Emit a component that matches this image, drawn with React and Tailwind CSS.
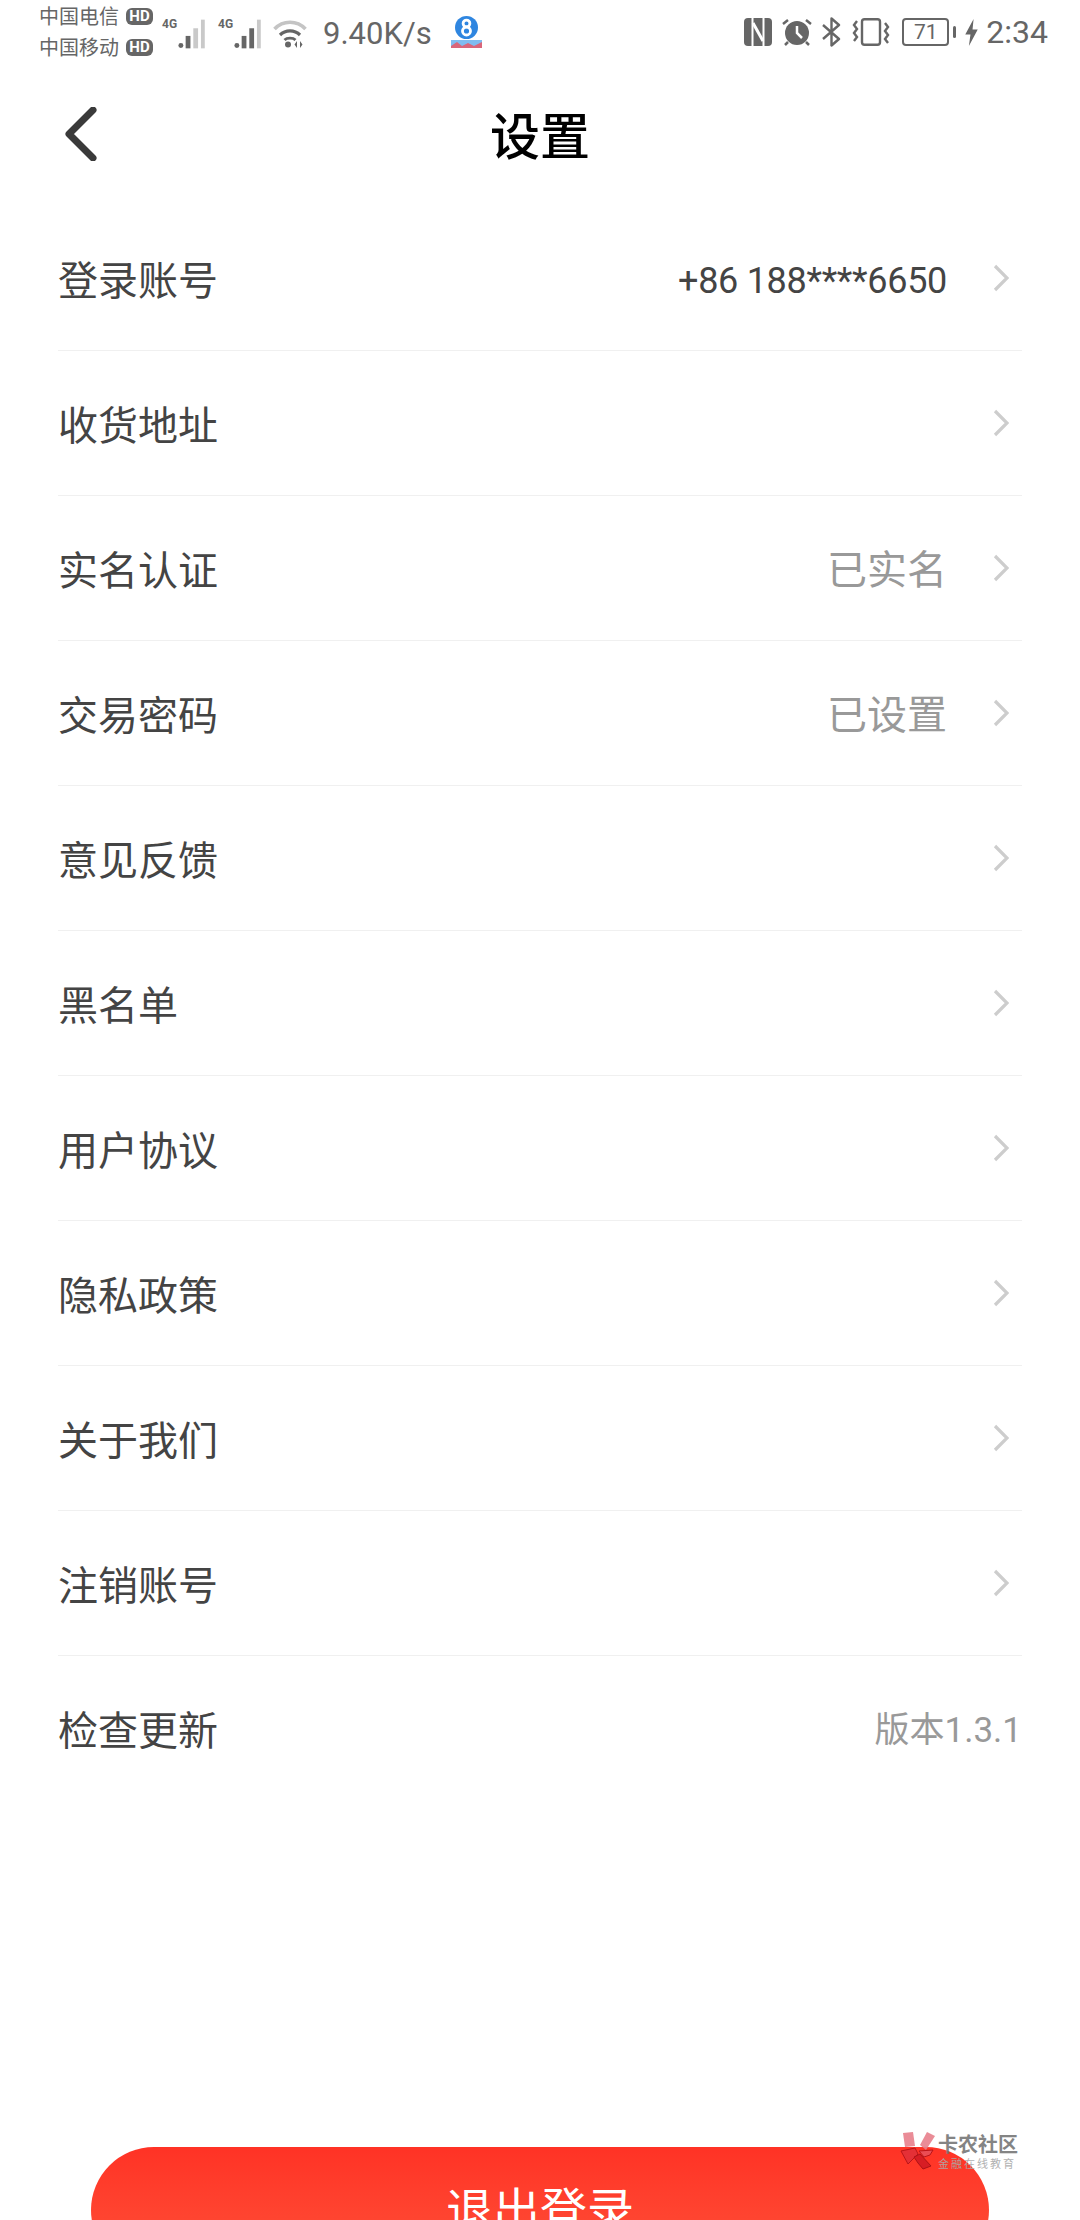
import React from 'react';

const rows = [
  { label: '登录账号', value: '+86 188****6650', dark: true },
  { label: '收货地址' },
  { label: '实名认证', value: '已实名' },
  { label: '交易密码', value: '已设置' },
  { label: '意见反馈' },
  { label: '黑名单' },
  { label: '用户协议' },
  { label: '隐私政策' },
  { label: '关于我们' },
  { label: '注销账号' },
];

const HdBadge = () => (
  <span className="flex h-[17px] w-[27px] items-center justify-center rounded-[6px] bg-[#666] text-[15px] leading-none font-bold text-white">
    HD
  </span>
);

const Signal = ({ level }) => (
  <div className="flex h-[34px] w-[44px] items-start">
    <span className="w-[17px] text-[12px] leading-[14px] font-bold text-[#666]">4G</span>
    <svg width="29" height="32" viewBox="0 0 29 32" className="mt-[1px]">
      <circle cx="3" cy="28" r="2.600" fill="#666" />
      <rect x="8" y="18" width="5" height="13" fill="#666" />
      <rect x="16" y="10" width="5" height="21" fill={level > 2 ? '#666' : '#c9c9c9'} />
      <rect x="24" y="1" width="4" height="30" fill="#c9c9c9" />
    </svg>
  </div>
);

const Wifi = () => (
  <svg width="36" height="30" viewBox="0 0 34 30" fill="none">
    <path d="M1.500 11 C10 2 24 2 32.500 11" stroke="#c4c4c4" strokeWidth="3.600" />
    <path d="M7 17 C12.500 11.500 21.500 11.500 27 17" stroke="#666" strokeWidth="3.200" />
    <path d="M11.500 22 C14 19.500 20 19.500 22.500 22" stroke="#666" strokeWidth="2.800" />
    <circle cx="15" cy="26.500" r="3" fill="#666" />
    <path d="M24 23 L21.500 26.500 L24 30 Z M27 23 L29.500 26.500 L27 30 Z" fill="#666" />
  </svg>
);

const AppBadge = () => (
  <svg width="31" height="32" viewBox="0 0 31 32">
    <circle cx="15.500" cy="11.500" r="11.500" fill="#2f86e0" />
    <circle cx="15.500" cy="7.500" r="3.400" fill="none" stroke="#fff" strokeWidth="2.800" />
    <circle cx="15.500" cy="15" r="4" fill="none" stroke="#fff" strokeWidth="2.800" />
    <rect x="0" y="24" width="31" height="8" fill="#7fbcf0" />
    <path d="M0 30 L6 26 L11 30 L17 27 L23 30 L31 26 L31 32 L0 32 Z" fill="#d9667a" />
  </svg>
);

const NfcIcon = () => (
  <svg width="28" height="28" viewBox="0 0 28 28">
    <rect width="28" height="28" rx="4" fill="#666" />
    <path d="M8.500 0 V28 M19.500 0 V28" stroke="#fff" strokeWidth="2" />
    <path d="M9 5 L19 23" stroke="#fff" strokeWidth="3" />
  </svg>
);

const AlarmIcon = () => (
  <svg width="30" height="28" viewBox="0 0 30 28" fill="none">
    <circle cx="15" cy="15" r="12" fill="#666" />
    <path d="M15 8 V15 L20 20" stroke="#fff" strokeWidth="2.500" />
    <path d="M1 6 L6 2 M29 6 L24 2" stroke="#666" strokeWidth="2.500" />
    <path d="M6 24 L3 27 M24 24 L27 27" stroke="#666" strokeWidth="2.500" />
  </svg>
);

const BluetoothIcon = () => (
  <svg width="19" height="30" viewBox="0 0 19 30" fill="none">
    <path d="M1 8 L17 22 L9.500 28.500 V1.500 L17 8 L1 22" stroke="#666" strokeWidth="2.400" strokeLinejoin="round" />
  </svg>
);

const VibrateIcon = () => (
  <svg width="38" height="28" viewBox="0 0 38 28" fill="none" stroke="#666">
    <rect x="10" y="1.200" width="18" height="25.600" rx="2.500" strokeWidth="2.400" />
    <path d="M5 3 L2 7 L5 11 L2 15 L5 19 L2 23" strokeWidth="2.400" />
    <path d="M33 5 L36 9 L33 13 L36 17 L33 21 L36 25" strokeWidth="2.400" />
  </svg>
);

const BoltIcon = () => (
  <svg width="13" height="27" viewBox="0 0 12 26">
    <path d="M8 0 L0 15 H5 L3.500 26 L12 10 H7 Z" fill="#666" />
  </svg>
);

const StatusBar = () => (
  <div className="flex h-[64px] items-center justify-between pr-[32px] pl-[39px] text-[#666]">
    <div className="flex items-center">
      <div className="flex w-[124px] flex-col gap-[11px] text-[20px] leading-[20px]">
        <div className="flex items-center gap-[7px]">中国电信<HdBadge /></div>
        <div className="flex items-center gap-[7px]">中国移动<HdBadge /></div>
      </div>
      <div className="ml-[-1px] flex gap-[12px] pt-[4px]">
        <Signal level={2} />
        <Signal level={3} />
      </div>
      <div className="ml-[10px] pt-[2px]"><Wifi /></div>
      <span className="ml-[15px] w-[128px] pt-[2px] text-[31px] leading-none">9.40K/s</span>
      <AppBadge />
    </div>
    <div className="flex items-center">
      <NfcIcon />
      <div className="ml-[10px]"><AlarmIcon /></div>
      <div className="ml-[10px]"><BluetoothIcon /></div>
      <div className="ml-[11px]"><VibrateIcon /></div>
      <div className="ml-[12px] flex h-[28px] w-[47px] items-center justify-center rounded-[4px] border-2 border-[#666] text-[21px] leading-none">71</div>
      <span className="ml-[4px] h-[12px] w-[3px] rounded-sm bg-[#666]" />
      <div className="ml-[9px]"><BoltIcon /></div>
      <span className="ml-[8px] text-[32px] leading-none">2:34</span>
    </div>
  </div>
);

const NavBar = () => (
  <div className="relative flex h-[142px] items-start justify-center">
    <svg width="32" height="54" viewBox="0 0 32 54" fill="none" className="absolute top-[43px] left-[65px]">
      <path d="M28 3 L4 27 L28 51" stroke="#3a3a3a" strokeWidth="7" strokeLinecap="round" strokeLinejoin="round" />
    </svg>
    <h1 className="mt-[45px] text-[50px] leading-[58px] font-medium text-black">设置</h1>
  </div>
);

const Chevron = () => (
  <svg width="16" height="28" viewBox="0 0 16 28" fill="none" className="ml-[46px]">
    <path d="M2 2 L14 14 L2 26" stroke="#cdcdcd" strokeWidth="3.200" />
  </svg>
);

const SettingRow = ({ label, value, dark }) => (
  <div className="flex h-[145px] items-center border-b border-[#f0f0f0] pr-[13px]">
    <span className="flex-1 pt-[7px] text-[40px] leading-none text-[#444]">{label}</span>
    {value && (
      <span
        className={
          dark
            ? 'pt-[5px] text-[36px] leading-none tracking-[-0.3px] text-[#444]'
            : 'pt-[5px] text-[40px] leading-none text-[#999]'
        }
      >
        {value}
      </span>
    )}
    <Chevron />
  </div>
);

const Watermark = () => (
  <div className="absolute top-[2130px] left-[900px] flex items-start opacity-90">
    <svg width="36" height="40" viewBox="0 0 36 40">
      <path d="M3 3 L13 2 L15 16 L5 17 Z" fill="#e8808c" />
      <path d="M20 15 L27 2 L35 6 L26 20 Z" fill="#e8808c" />
      <path d="M1 21 L15 18 L18 24 L8 34 Z" fill="#e23038" stroke="#b31218" />
      <path d="M19 21 L33 20 L30 25 L24 27 Z" fill="#e8505a" stroke="#b31218" />
      <path d="M14 27 L20 24 L31 36 L23 39 L18 33 Z" fill="#d31b24" stroke="#a50f15" />
    </svg>
    <div className="ml-[2px] flex flex-col">
      <span className="mt-[4px] text-[20px] leading-[22px] font-bold text-[#777]">卡农社区</span>
      <span className="mt-[3px] text-[11px] leading-[12px] tracking-[2px] text-[#aaa]">金融在线教育</span>
    </div>
  </div>
);

export default function App() {
  return (
    <div
      className="relative h-[2220px] w-[1080px] overflow-hidden bg-white"
      style={{ fontFamily: 'Roboto, "Noto Sans CJK SC", sans-serif' }}
    >
      <StatusBar />
      <NavBar />
      <div className="mx-[58px]">
        {rows.map((row) => (
          <SettingRow key={row.label} {...row} />
        ))}
        <div className="flex h-[144px] items-center justify-between">
          <span className="pt-[7px] text-[40px] leading-none text-[#444]">检查更新</span>
          <span className="pt-[5px] text-[35px] leading-none text-[#999]">版本1.3.1</span>
        </div>
      </div>
      <button className="mx-[91px] mt-[347px] h-[126px] w-[898px] rounded-[63px] bg-gradient-to-b from-[#ff3225] to-[#ff5038] text-[47px] leading-none text-white">
        退出登录
      </button>
      <Watermark />
    </div>
  );
}
